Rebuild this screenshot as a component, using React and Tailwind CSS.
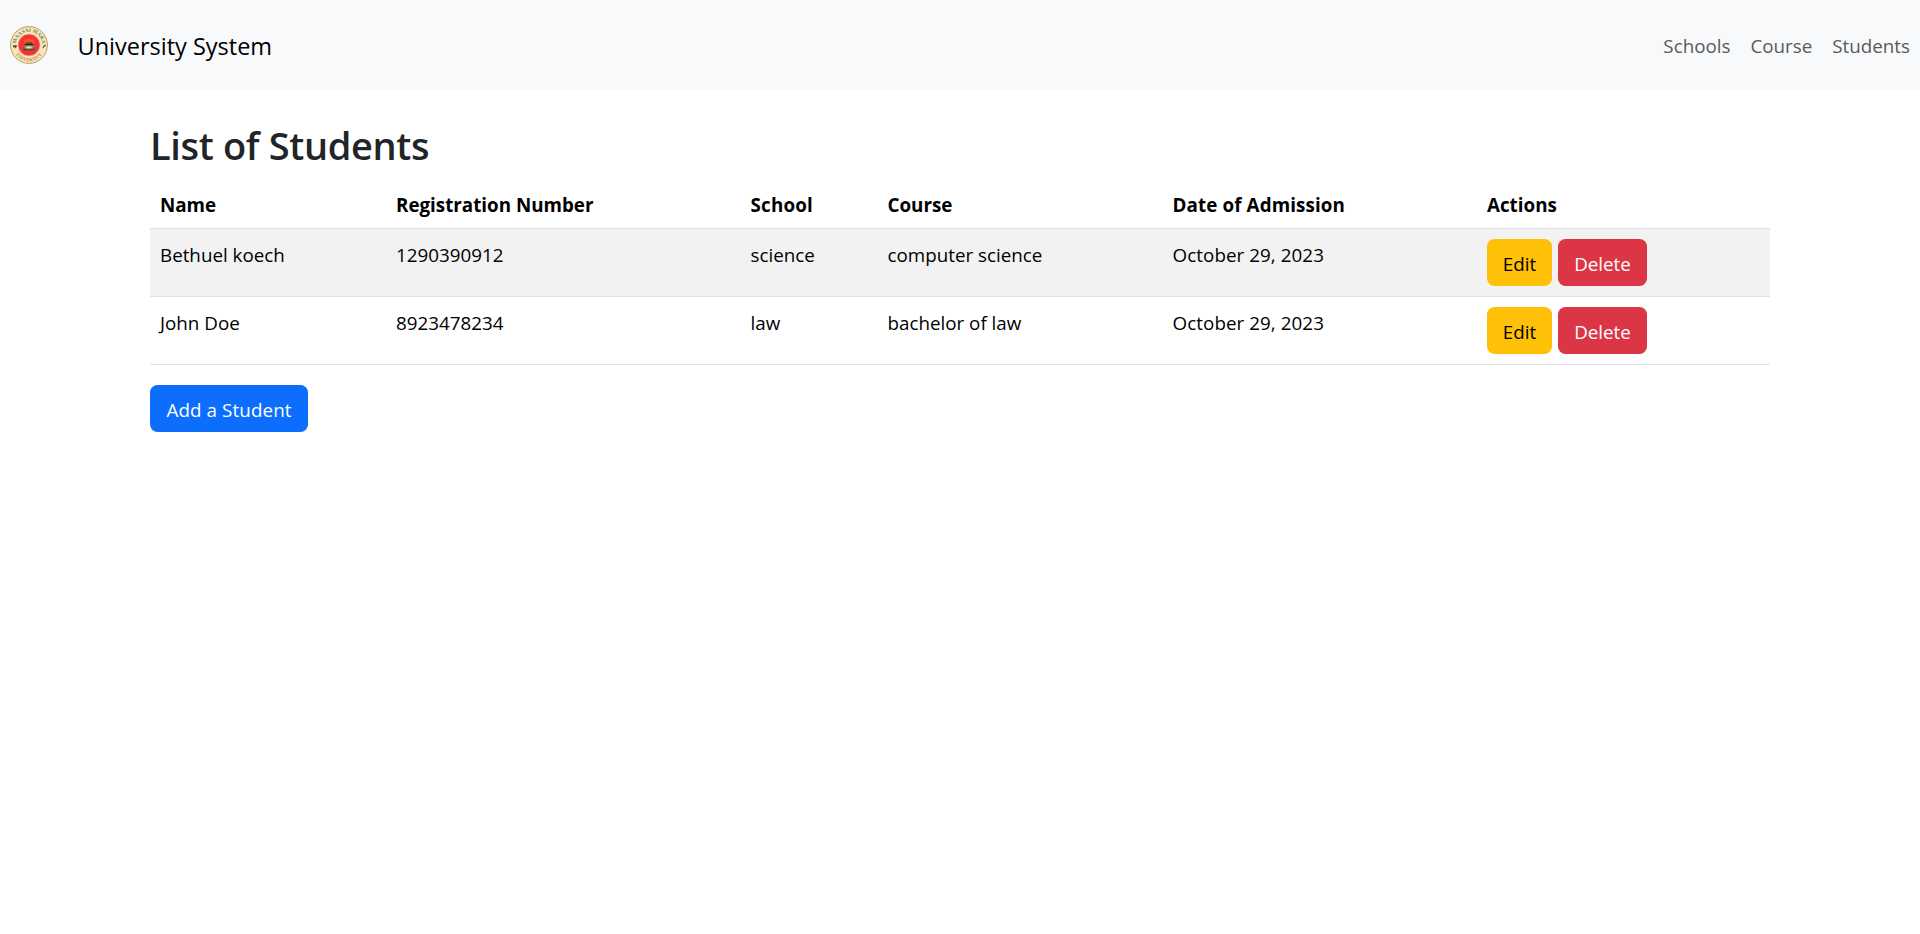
const students = [
  { name: "Bethuel koech", reg: "1290390912", school: "science", course: "computer science", date: "October 29, 2023" },
  { name: "John Doe", reg: "8923478234", school: "law", course: "bachelor of law", date: "October 29, 2023" },
];

const columns = [
  { label: "Name", width: "w-[236px]" },
  { label: "Registration Number", width: "w-[354.5px]" },
  { label: "School", width: "w-[137px] tracking-[0.2px]" },
  { label: "Course", width: "w-[285px]" },
  { label: "Date of Admission", width: "w-[314.5px] tracking-[0.12px]" },
  { label: "Actions", width: "w-[293px]" },
];

function Logo() {
  return (
    <svg className="h-10 w-10 shrink-0" viewBox="0 0 40 40">
      <defs>
        <path id="arc-top" d="M5.9 20 A13.1 13.1 0 0 1 32.1 20" />
        <path id="arc-bottom" d="M2.7 20 A16.3 16.3 0 0 0 35.3 20" />
      </defs>
      <circle cx="19" cy="20" r="18.4" fill="#fae6bd" stroke="#b8924a" strokeWidth="0.9" />
      <circle cx="19" cy="20" r="11" fill="#f8323a" stroke="#fbc9b0" strokeWidth="0.6" />
      <text fontSize="5.2" fontWeight="700" fill="#5e8a5c" fontFamily="Liberation Serif, serif" textAnchor="middle">
        <textPath href="#arc-top" startOffset="50%">MAASAI MARA</textPath>
      </text>
      <text fontSize="4.8" fontWeight="700" fill="#b3914b" fontFamily="Liberation Serif, serif" textAnchor="middle">
        <textPath href="#arc-bottom" startOffset="50%">UNIVERSITY</textPath>
      </text>
      <path d="M14 14.5q5-1.500 10 0v9q-5 4-10 0z" fill="#ef5a24" stroke="#c8552a" strokeWidth="0.5" />
      <path d="M16 17h6v2h-6z" fill="#a63a20" />
      <path d="M14.5 18.8h9v1.700h-9z" fill="#34231d" />
      <path d="M14.5 20.5h9v2.700h-9z" fill="#6d9c80" />
      <path d="M16.5 21.5h5v1.800h-5z" fill="#e6e5c6" />
      <path d="M13.5 23.3q5.500 2 11 0v2.200h-11z" fill="#245e43" />
      <path d="M3 20.2h3.800v2h-1v1h-1v-1h-1.800z" fill="#55483a" />
      <path d="M32.5 23l1-2.500 1.500-.5 1-.8-.5 2-1.500.5-.5 1.500z" fill="#55483a" />
    </svg>
  );
}

function Button({ className, children }) {
  return (
    <a href="#" className={`inline-flex h-[47px] items-center justify-center rounded-[7.5px] pt-[3px] whitespace-nowrap ${className}`}>
      {children}
    </a>
  );
}

export default function App() {
  return (
    <div className="min-h-screen bg-white font-['Open_Sans',sans-serif] text-[18.8px] leading-[30px] text-black">
      <nav className="flex h-[90px] items-center justify-between bg-[#f8f9fa] px-2.5">
        <a href="#" className="flex items-center gap-[27.5px]">
          <Logo />
          <span className="pt-px text-[23.5px] whitespace-nowrap">University System</span>
        </a>
        <div className="flex gap-5 pt-px text-[#595a5b]">
          <a href="#">Schools</a>
          <a href="#">Course</a>
          <a href="#">Students</a>
        </div>
      </nav>
      <main className="mx-auto w-[1620px] pt-[30px]">
        <h1 className="h-[59px] pt-px text-[38px] leading-[48px] font-semibold tracking-[-0.35px] text-[#212529]">List of Students</h1>
        <table className="w-full table-fixed border-separate border-spacing-0">
          <thead>
            <tr>
              {columns.map((c) => (
                <th key={c.label} className={`h-[50px] border-b border-[#dee2e6] px-2.5 pt-[3px] pb-0 text-left font-bold ${c.width}`}>
                  {c.label}
                </th>
              ))}
            </tr>
          </thead>
          <tbody className="[&_td]:h-[68px] [&_td]:border-b [&_td]:border-[#dee2e6] [&_td]:px-2.5 [&_td]:pt-[11px] [&_td]:pb-0 [&_td]:align-top">
            {students.map((s) => (
              <tr key={s.name} className="odd:bg-[#f2f2f2]">
                <td>{s.name}</td>
                <td>{s.reg}</td>
                <td>{s.school}</td>
                <td>{s.course}</td>
                <td className="tracking-[0.07px]">{s.date}</td>
                <td>
                  <div className="-mt-px flex gap-1.5">
                    <Button className="w-[65px] bg-[#ffc107]">Edit</Button>
                    <Button className="w-[89px] bg-[#dc3545] text-white">Delete</Button>
                  </div>
                </td>
              </tr>
            ))}
          </tbody>
        </table>
        <div className="mt-5 flex">
          <Button className="w-[158px] bg-[#0d6efd] tracking-[0.1px] text-white">Add a Student</Button>
        </div>
      </main>
    </div>
  );
}
